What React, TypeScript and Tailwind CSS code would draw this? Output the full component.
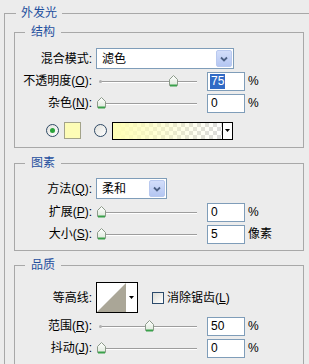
import React from "react";

const font = { fontFamily: '"Liberation Sans", "Noto Sans CJK SC", sans-serif' };

function Key({ text, k }: { text: string; k: string }) {
  return (
    <span>
      {text}(<span className="underline">{k}</span>):
    </span>
  );
}

function Label({ children }: { children: React.ReactNode }) {
  return <div className="w-[77px] shrink-0 whitespace-nowrap text-right">{children}</div>;
}

function Thumb() {
  return (
    <svg width="9" height="12" viewBox="0 0 9 12">
      <defs>
        <linearGradient id="tg" x1="0" y1="0" x2="0" y2="1">
          <stop offset="0" stopColor="#ffffff" />
          <stop offset="1" stopColor="#dfe9dc" />
        </linearGradient>
      </defs>
      <path d="M0.5 4.5 L4.5 0.5 L8.5 4.5 L8.5 10.5 L0.5 10.5 Z" fill="url(#tg)" stroke="#8c9a8a" />
      <path d="M1 10.5 H8" stroke="#3aa14b" strokeWidth="2" />
    </svg>
  );
}

function Slider({ pct }: { pct: number }) {
  const left = 5 + (pct / 100) * 97 - 4.5;
  return (
    <div className="relative ml-[4px] h-full w-[111px] shrink-0">
      <div className="absolute left-[4px] top-[10px] h-[1px] w-[97px] bg-[#9d9d9d] shadow-[0_1px_0_#ffffff]" />
      <div className="absolute left-[3px] top-[9px] size-[3px] rounded-full bg-[#b0b0b0]" />
      <div className="absolute top-[4px]" style={{ left }}>
        <Thumb />
      </div>
    </div>
  );
}

function NumBox({ value, selected }: { value: string; selected?: boolean }) {
  return (
    <div className="flex h-[19px] w-[38px] shrink-0 items-center border border-[#7f9db9] bg-white pl-[2px] leading-[15px]">
      {selected ? <span className="bg-[#316ac5] px-[1px] text-white">{value}</span> : <span className="px-[1px]">{value}</span>}
    </div>
  );
}

function SliderRow({ label, pct, value, unit, selected, mt }: { label: React.ReactNode; pct: number; value: string; unit: string; selected?: boolean; mt: string }) {
  return (
    <div className={`flex h-[20px] items-center ${mt}`}>
      <Label>{label}</Label>
      <Slider pct={pct} />
      <NumBox value={value} selected={selected} />
      <span className="ml-[3px]">{unit}</span>
    </div>
  );
}

function Select({ value, width }: { value: string; width: string }) {
  return (
    <div className={`ml-[4px] flex h-[21px] ${width} items-center border border-[#7f9db9] bg-white`}>
      <span className="flex-1 pl-[5px]">{value}</span>
      <div className="mr-[1px] flex h-[17px] w-[16px] items-center justify-center rounded-[2px] border border-[#b9c9ef] bg-[linear-gradient(#d3defa,#b4c6f2)]">
        <svg width="8" height="6" viewBox="0 0 8 6">
          <path d="M1 1.5 L4 4.5 L7 1.5" fill="none" stroke="#4d6185" strokeWidth="1.8" />
        </svg>
      </div>
    </div>
  );
}

function Radio({ on }: { on?: boolean }) {
  return (
    <div className="flex size-[13px] shrink-0 items-center justify-center rounded-full border border-[#2f4a66] bg-[linear-gradient(135deg,#e2e2dd,#ffffff)]">
      {on && <div className="size-[5px] rounded-full bg-[#2aa33a]" />}
    </div>
  );
}

function Group({ title, mt, children }: { title: string; mt: string; children: React.ReactNode }) {
  return (
    <fieldset className={`ml-[9px] ${mt} w-[290px] min-w-0 border border-[#a8a8a8] p-0`}>
      <legend className="ml-[10px] px-[6px] leading-[16px] text-[#1f4f9e]">{title}</legend>
      {children}
    </fieldset>
  );
}

export default function App() {
  return (
    <div className="h-[364px] w-[309px] overflow-hidden bg-[#ececec] pl-[4px] pt-[5px] text-[12px] leading-[16px] text-black" style={font}>
      <fieldset className="m-0 h-[400px] w-[320px] min-w-0 border border-[#a8a8a8] p-0">
        <legend className="ml-[11px] px-[5px] leading-[16px] text-[#1f4f9e]">外发光</legend>

        <Group title="结构" mt="mt-[3px]">
          <div className="flex flex-col pb-[8px] pt-[8px]">
            <div className="flex h-[21px] items-center">
              <Label>混合模式:</Label>
              <Select value="滤色" width="w-[138px]" />
            </div>
            <SliderRow label={<Key text="不透明度" k="O" />} pct={75} value="75" unit="%" selected mt="mt-[2px]" />
            <SliderRow label={<Key text="杂色" k="N" />} pct={0} value="0" unit="%" mt="mt-[2px]" />
            <div className="mt-[9px] flex h-[17px] items-center pl-[31px]">
              <Radio on />
              <div className="ml-[5px] h-[17px] w-[17px] border border-[#a3a38a] bg-[#fdfcb6]" />
              <div className="ml-[13px]">
                <Radio />
              </div>
              <div className="ml-[5px] flex h-[18px] w-[121px] border border-black">
                <div className="flex-1 bg-[image:linear-gradient(to_right,#ffffb4,rgba(255,255,180,0.2)_75%,rgba(255,255,180,0)),conic-gradient(#dcdcdc_25%,#ffffff_0_50%,#dcdcdc_0_75%,#ffffff_0)] bg-[length:100%_100%,8px_8px]" />
                <div className="flex w-[10px] items-center justify-center border-l border-black bg-white">
                  <svg width="5" height="3" viewBox="0 0 5 3">
                    <path d="M0 0 H5 L2.5 3 Z" fill="#000" />
                  </svg>
                </div>
              </div>
            </div>
          </div>
        </Group>

        <Group title="图素" mt="mt-[7px]">
          <div className="flex flex-col pb-[6px] pt-[7px]">
            <div className="flex h-[21px] items-center">
              <Label>
                <Key text="方法" k="Q" />
              </Label>
              <Select value="柔和" width="w-[71px]" />
            </div>
            <SliderRow label={<Key text="扩展" k="P" />} pct={0} value="0" unit="%" mt="mt-[3px]" />
            <SliderRow label={<Key text="大小" k="S" />} pct={0} value="5" unit="像素" mt="mt-[2px]" />
          </div>
        </Group>

        <Group title="品质" mt="mt-[6px]">
          <div className="flex flex-col pb-[8px] pt-[9px]">
            <div className="flex h-[31px] items-center">
              <Label>等高线:</Label>
              <svg className="ml-[4px] shrink-0" width="42" height="31" viewBox="0 0 42 31">
                <rect x="0.5" y="0.5" width="41" height="30" fill="#fff" stroke="#000" />
                <path d="M1 30 L30 1 L30 30 Z" fill="#aaa697" />
                <path d="M33 14 H38 L35.5 17 Z" fill="#000" />
              </svg>
              <div className="ml-[14px] size-[12px] shrink-0 border border-[#2b4a6b] bg-[linear-gradient(135deg,#dcdcd6,#ffffff)]" />
              <span className="ml-[3px]">
                消除锯齿(<span className="underline">L</span>)
              </span>
            </div>
            <SliderRow label={<Key text="范围" k="R" />} pct={50} value="50" unit="%" mt="mt-[3px]" />
            <SliderRow label={<Key text="抖动" k="J" />} pct={0} value="0" unit="%" mt="mt-[2px]" />
          </div>
        </Group>
      </fieldset>
    </div>
  );
}
